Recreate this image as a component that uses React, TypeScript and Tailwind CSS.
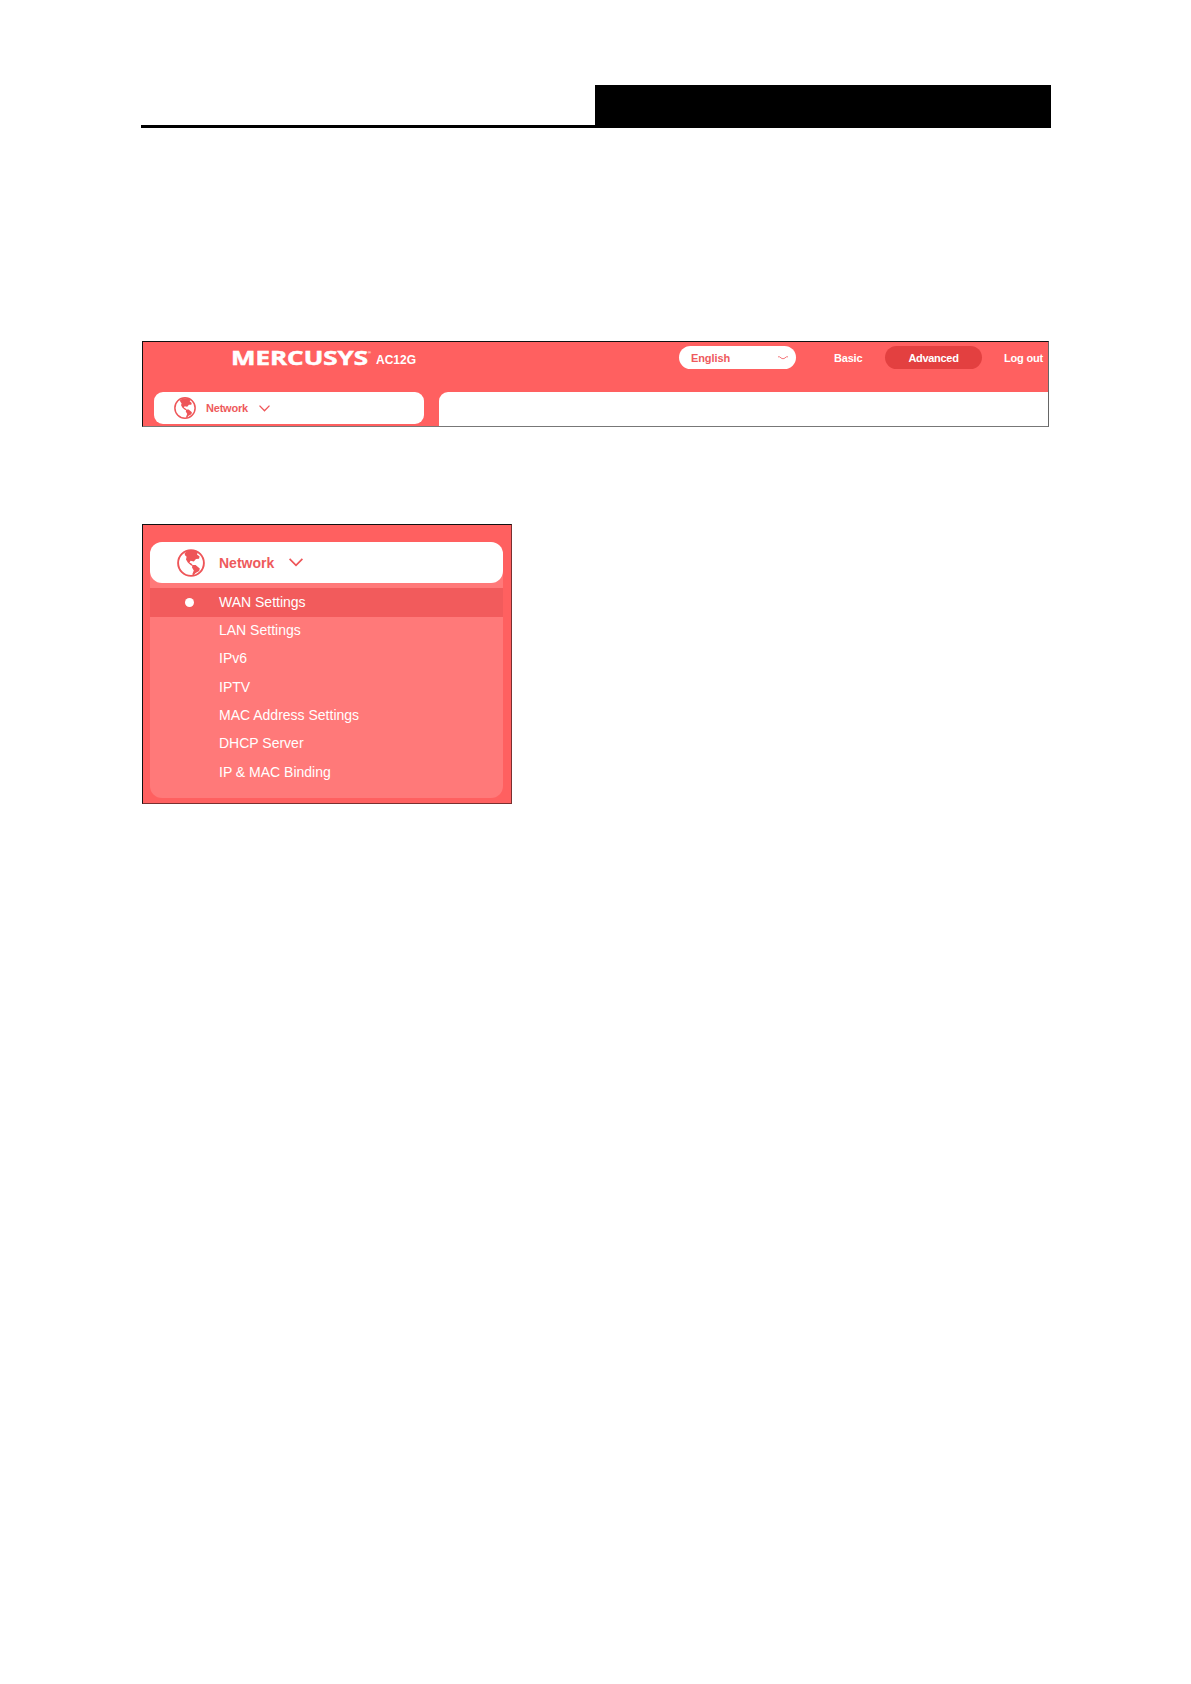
import React from "react";

const menuItems = [
  "WAN Settings",
  "LAN Settings",
  "IPv6",
  "IPTV",
  "MAC Address Settings",
  "DHCP Server",
  "IP & MAC Binding",
];

function Globe({ className }: { className: string }) {
  return (
    <svg viewBox="0 0 28 28" className={className} fill="none">
      <circle cx="14" cy="14" r="12.9" stroke="#ee5558" strokeWidth="1.9" />
      <path
        d="M7.6 4.2 11 1.6h6.6l3.2 2-.8 1.8 2.6 2.2-.6 2.2-3 .2-2.2 2.4-3.2-.6-1.2 1.6 2 1 1.8 2.4-2-.4-3.4-2.8-1.8-3.2.6-2.6-1.6-1.6z"
        fill="#ee5558"
      />
      <path d="M15.4 16 18.6 16 22.8 19.4 22.2 22 18.6 24 16 27 15.4 25 16.8 21.6 15 18.4z" fill="#ee5558" />
    </svg>
  );
}

function Chevron({ className }: { className: string }) {
  return (
    <svg viewBox="0 0 14 9" className={className} fill="none">
      <path d="M.6 .8 7 7.4 13.4 .8" stroke="#ee5558" strokeWidth="1.7" />
    </svg>
  );
}

function PageHeader() {
  return (
    <div className="flex h-[43px] w-[910px] justify-end border-b-[3px] border-black">
      <div className="w-[456px] bg-black" />
    </div>
  );
}

function TopBar() {
  return (
    <div className="ml-px h-[86px] w-[907px] border border-[#111] border-r-[#666] border-b-[#777] bg-[#ff6060]">
      <div className="flex h-[50px] items-start pt-1 text-[11px] leading-[23px] font-bold text-white">
        <svg className="ml-[88px] h-[28px] w-[141px] overflow-visible" viewBox="0 0 141 28">
          <text
            x="0"
            y="19"
            textLength="137"
            lengthAdjust="spacingAndGlyphs"
            strokeWidth="0.5"
            className="fill-white stroke-white font-['Open_Sans'] text-[19.5px] font-bold"
          >
            MERCUSYS
          </text>
          <text x="137" y="8" className="fill-white font-['Liberation_Sans'] text-[4px]">®</text>
        </svg>
        <span className="mt-[3px] ml-[4px] w-[303px] text-[12px]">AC12G</span>
        <div className="flex h-[23px] w-[117px] shrink-0 items-center justify-between rounded-full bg-white pr-2 pl-[12px] text-[#ee5a5c]">
          <span className="pt-px tracking-[-0.1px]">English</span>
          <svg viewBox="0 0 10 4" className="h-1 w-[10px]" fill="none">
            <path d="M0 .8h1.5L4 2.6h2L8.5 .8H10" stroke="#f0565a" strokeWidth=".8" />
          </svg>
        </div>
        <span className="mt-px ml-[38px] w-[51px] tracking-[-0.2px]">Basic</span>
        <div className="h-[23px] w-[97px] shrink-0 rounded-full bg-[#e34040] pt-px text-center tracking-[-0.3px]">
          Advanced
        </div>
        <span className="mt-px ml-[22px] tracking-[-0.2px] whitespace-nowrap">Log out</span>
      </div>
      <div className="flex items-start">
        <div className="ml-[11px] flex h-8 w-[270px] items-center rounded-[9px] bg-white pl-5">
          <Globe className="h-[22px] w-[22px]" />
          <span className="ml-[10px] w-[53px] text-[11px] font-bold tracking-[-0.2px] text-[#ee5a5c]">Network</span>
          <Chevron className="h-[7px] w-[11px]" />
        </div>
        <div className="ml-[15px] h-[34px] flex-1 rounded-tl-[9px] bg-white" />
      </div>
    </div>
  );
}

function NetworkMenu() {
  return (
    <div className="ml-px h-[280px] w-[370px] border border-[#111] border-r-[#7a3030] border-b-[#7a3030] bg-[#ff6060] px-[7px] pt-[17px]">
      <div className="mr-px h-[256px] rounded-[12px] bg-[#ff7979]">
        <div className="flex h-[41px] items-center rounded-[12px] bg-white pl-[27px]">
          <Globe className="h-7 w-7" />
          <span className="ml-[14px] w-[70px] pt-px text-[14px] font-bold text-[#ee5a5c]">Network</span>
          <Chevron className="h-[9px] w-[14px]" />
        </div>
        <div className="pt-[5px]">
          {menuItems.map((item, i) => (
            <div
              key={item}
              className={
                i === 0
                  ? "mb-[-0.6px] flex h-[29px] items-center bg-[#f25b5c] text-[14px] text-white"
                  : "flex h-[28.3px] items-center text-[14px] text-white"
              }
            >
              <div className="flex w-[69px] pl-[35px]">
                {i === 0 && <i className="h-[9px] w-[9px] rounded-full bg-white" />}
              </div>
              {item}
            </div>
          ))}
        </div>
      </div>
    </div>
  );
}

export default function App() {
  return (
    <main className="flex h-[1684px] w-[1191px] flex-col bg-white pt-[85px] pl-[141px] font-['Liberation_Sans',Arial,sans-serif]">
      <PageHeader />
      <div className="mt-[213px]">
        <TopBar />
      </div>
      <div className="mt-[97px]">
        <NetworkMenu />
      </div>
    </main>
  );
}
